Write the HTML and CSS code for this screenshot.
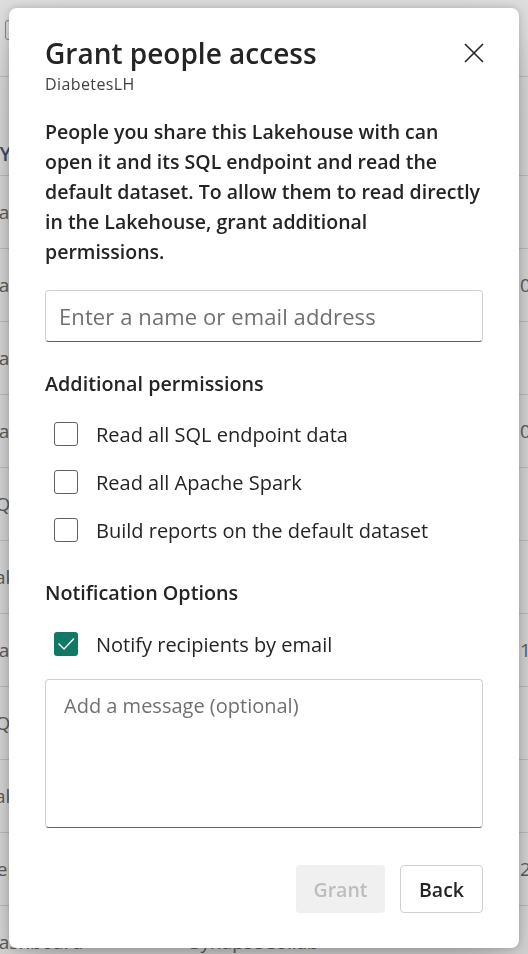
FILE: index.html
```html
<!DOCTYPE html>
<html lang="en">
<head>
<meta charset="utf-8">
<title>Grant people access</title>
<link rel="stylesheet" href="styles.css">
</head>
<body>
<div class="page">
  <div class="topbar"><span class="tb-icon"></span></div>
  <div class="thead"><span class="th">TYPE</span></div>
  <div class="rows">
    <div class="row"><span>Dataset</span><span>SynapseCollab</span><span></span></div>
    <div class="row"><span>Dataset</span><span>SynapseCollab</span><span>04/12/2023</span></div>
    <div class="row"><span>Dataset</span><span>SynapseCollab</span><span></span></div>
    <div class="row"><span>Dataset</span><span>SynapseCollab</span><span>04/12/2023</span></div>
    <div class="row"><span>SQL endpoint</span><span>SynapseCollab</span><span></span></div>
    <div class="row"><span>Lakehouse</span><span>SynapseCollab</span><span></span></div>
    <div class="row"><span>Dataset</span><span>SynapseCollab</span><span>1/05/2023</span></div>
    <div class="row"><span>SQL endpoint</span><span>SynapseCollab</span><span></span></div>
    <div class="row"><span>Lakehouse</span><span>SynapseCollab</span><span></span></div>
    <div class="row"><span>Report</span><span>SynapseCollab</span><span>2/05/2023</span></div>
    <div class="row"><span>Dashboard</span><span>SynapseCollab</span><span></span></div>
  </div>
</div>
<div class="overlay"></div>
<div class="dialog" role="dialog">
  <div class="head">
    <div>
      <h1 class="title">Grant people access</h1>
      <div class="subtitle">DiabetesLH</div>
    </div>
    <svg class="close" width="20" height="20" viewBox="0 0 20 20"><path d="M1 1 L19 19 M19 1 L1 19" stroke="#242424" stroke-width="1.6" fill="none"/></svg>
  </div>
  <p class="desc">People you share this Lakehouse with can<br>open it and its SQL endpoint and read the<br>default dataset. To allow them to read directly<br>in the Lakehouse, grant additional<br>permissions.</p>
  <div class="input">Enter a name or email address</div>
  <div class="section">Additional permissions</div>
  <div class="checks">
    <div class="check-row"><span class="box"></span><span>Read all SQL endpoint data</span></div>
    <div class="check-row"><span class="box"></span><span>Read all Apache Spark</span></div>
    <div class="check-row"><span class="box"></span><span>Build reports on the default dataset</span></div>
  </div>
  <div class="section notif">Notification Options</div>
  <div class="checks notif-checks">
    <div class="check-row"><span class="box checked"><svg width="24" height="24" viewBox="0 0 24 24"><path d="M4.5 11.5 L10 17 L20 6.5" stroke="#fff" stroke-width="1.4" fill="none"/></svg></span><span>Notify recipients by email</span></div>
  </div>
  <div class="textarea">Add a message (optional)</div>
  <div class="actions">
    <div class="btn grant">Grant</div>
    <div class="btn back">Back</div>
  </div>
</div>
</body>
</html>
```
FILE: styles.css
```css
html, body {
  margin: 0;
  padding: 0;
  overflow: hidden;
  background: #ffffff;
  font-family: "Open Sans", "Noto Sans", sans-serif;
}

.page {
  width: 528px;
  height: 954px;
  overflow: hidden;
}

.topbar {
  height: 77px;
  border-bottom: 1px solid #e0e0e0;
  padding-top: 20px;
  box-sizing: border-box;
}

.tb-icon {
  display: block;
  margin-left: 5px;
  width: 16px;
  height: 18px;
  border: 1.5px solid #9a9a9a;
  border-radius: 3px;
}

.thead {
  height: 99px;
  border-bottom: 1px solid #e0e0e0;
  display: flex;
  align-items: flex-end;
  padding-bottom: 8px;
  box-sizing: border-box;
  margin-left: -11px;
}

.th {
  font-size: 19px;
  font-weight: 600;
  color: #4a5775;
  line-height: 26px;
}

.rows {
  margin-left: -15px;
}

.row {
  height: 72px;
  border-bottom: 1px solid #e0e0e0;
  display: grid;
  grid-template-columns: 205px 330px 200px;
  align-items: center;
  font-size: 19px;
  color: #6e6e6e;
  white-space: nowrap;
  overflow: hidden;
}

.overlay {
  position: fixed;
  inset: 0;
  background: rgba(0, 0, 0, 0.13);
}

.dialog {
  position: fixed;
  left: 9px;
  top: 8px;
  width: 510px;
  height: 940px;
  box-sizing: border-box;
  padding: 27px 36px 35px;
  background: #ffffff;
  border-radius: 8px;
  box-shadow: 0 32px 64px rgba(0, 0, 0, 0.24), 0 0 8px rgba(0, 0, 0, 0.2);
  display: flex;
  flex-direction: column;
  color: #242424;
}

.head {
  display: flex;
  justify-content: space-between;
  align-items: flex-start;
}

.title {
  margin: 0;
  font-size: 28px;
  font-weight: 600;
  line-height: 36px;
  color: #242424;
}

.subtitle {
  margin-top: 3px;
  font-size: 16px;
  letter-spacing: 0.4px;
  line-height: 20px;
  color: #424242;
}

.close {
  margin-top: 8px;
  margin-right: -1px;
}

.desc {
  margin: 23px 0 0;
  font-size: 19.5px;
  font-weight: 600;
  line-height: 30px;
  white-space: nowrap;
}

.input {
  margin-top: 23px;
  height: 52px;
  box-sizing: border-box;
  border: 1px solid #d1d1d1;
  border-bottom-color: #616161;
  border-radius: 4px;
  padding: 0 13px;
  display: flex;
  align-items: center;
  font-size: 22px;
  letter-spacing: 0.1px;
  color: #707070;
}

.section {
  margin-top: 29px;
  font-size: 19.75px;
  font-weight: 600;
  line-height: 26px;
}

.section.notif {
  margin-top: 26px;
}

.checks {
  margin-top: 13px;
}

.notif-checks {
  margin-top: 14px;
}

.check-row {
  height: 48px;
  display: flex;
  align-items: center;
  gap: 18px;
  padding-left: 9px;
  font-size: 20px;
  color: #242424;
}

.box {
  width: 24px;
  height: 24px;
  box-sizing: border-box;
  border: 1.5px solid #616161;
  border-radius: 3px;
  flex: none;
}

.box.checked {
  border: none;
  background: #117865;
}

.box.checked svg {
  display: block;
}

.textarea {
  margin-top: 11px;
  height: 149px;
  box-sizing: border-box;
  border: 1px solid #d1d1d1;
  border-bottom-color: #616161;
  border-radius: 4px;
  padding: 13px 18px;
  font-size: 20px;
  line-height: 26px;
  color: #707070;
}

.actions {
  margin-top: auto;
  display: flex;
  justify-content: flex-end;
  gap: 15px;
}

.btn {
  height: 48px;
  box-sizing: border-box;
  border-radius: 4px;
  display: flex;
  align-items: center;
  justify-content: center;
  font-size: 19.5px;
  font-weight: 600;
}

.grant {
  width: 89px;
  background: #f0f0f0;
  color: #bdbdbd;
}

.back {
  width: 83px;
  background: #ffffff;
  border: 1px solid #d1d1d1;
  color: #242424;
}
```
